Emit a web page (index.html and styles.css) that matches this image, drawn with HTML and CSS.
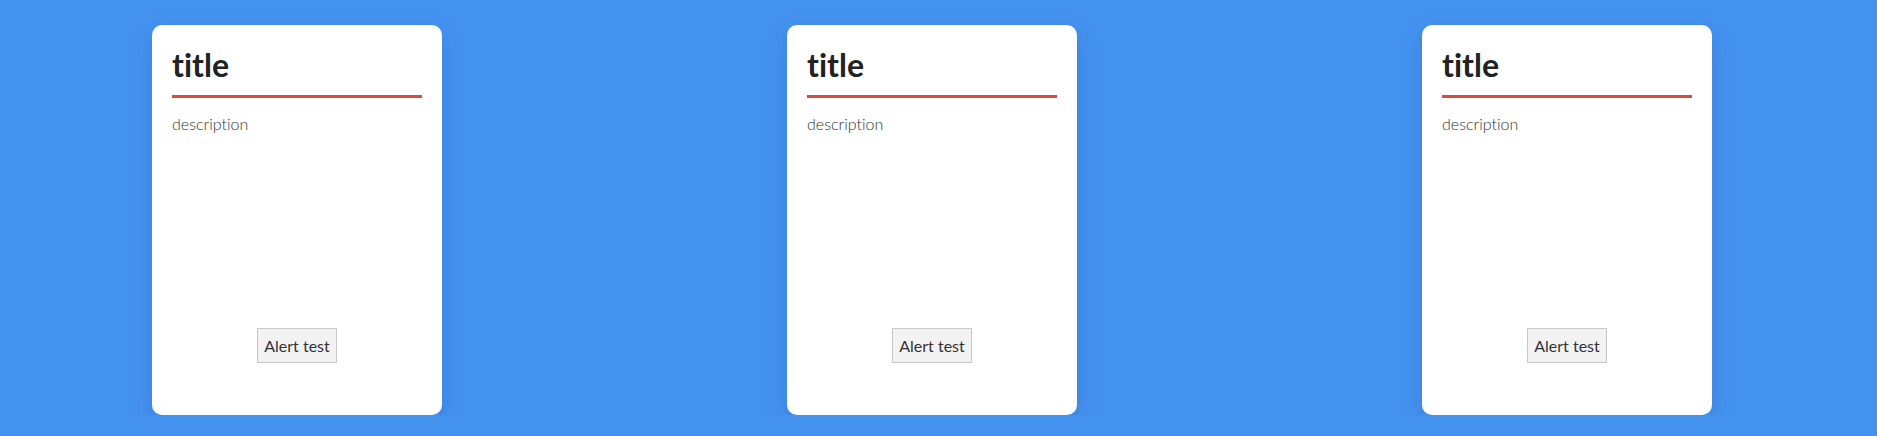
FILE: index.html
```html
<!DOCTYPE html>
<html>
<head>
<meta charset="utf-8">
<link rel="stylesheet" href="styles.css">
</head>
<body>
<div class="row">
  <div class="card">
    <h1 class="card-title">title</h1>
    <p class="card-desc">description</p>
    <button class="card-btn">Alert test</button>
  </div>
  <div class="card">
    <h1 class="card-title">title</h1>
    <p class="card-desc">description</p>
    <button class="card-btn">Alert test</button>
  </div>
  <div class="card">
    <h1 class="card-title">title</h1>
    <p class="card-desc">description</p>
    <button class="card-btn">Alert test</button>
  </div>
</div>
</body>
</html>
```
FILE: styles.css
```css
html, body {
  margin: 0;
  padding: 0;
  background: #4492ef;
  font-family: Lato, "Open Sans", sans-serif;
  font-variant-ligatures: none;
}
.row {
  display: flex;
  gap: 345px;
  padding: 25px 0 0 152px;
}
.card {
  width: 290px;
  height: 390px;
  box-sizing: border-box;
  background: #fff;
  border-radius: 10px;
  padding: 20px;
  display: flex;
  flex-direction: column;
  box-shadow: 0 8px 20px rgba(40, 80, 160, 0.25);
}
.card-title {
  margin: 0;
  font-size: 32px;
  line-height: 40px;
  font-weight: 700;
  color: #222;
  padding-bottom: 10px;
  border-bottom: 3px solid #d94b3e;
  font-variant-ligatures: none;
}
.card-desc {
  margin: 15px 0 0;
  font-size: 16px;
  line-height: 22px;
  font-weight: 300;
  color: #333;
  font-variant-ligatures: none;
}
.card-btn {
  margin: auto auto 32px;
  font-family: inherit;
  font-size: 16px;
  line-height: 19px;
  padding: 7px 6px;
  color: #333;
  background: #f3f3f3;
  border: 1px solid #c8c8c8;
  border-radius: 0;
}
```
